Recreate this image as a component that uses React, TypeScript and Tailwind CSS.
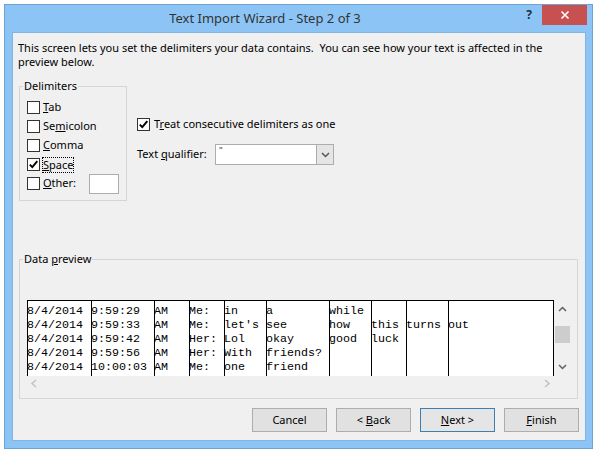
import React from "react";

function Check({ checked }: { checked?: boolean }) {
  return (
    <div className="w-[13px] h-[13px] border border-[#333333] bg-white flex items-center justify-center shrink-0">
      {checked && (
        <svg width="11" height="11" viewBox="0 0 11 11">
          <path d="M1.8 5.6 L4.3 8.2 L9.3 2.2" fill="none" stroke="#000" strokeWidth="1.9" />
        </svg>
      )}
    </div>
  );
}

const cols: { w: number; rows: string[] }[] = [
  { w: 63, rows: ["8/4/2014", "8/4/2014", "8/4/2014", "8/4/2014", "8/4/2014"] },
  { w: 63, rows: ["9:59:29", "9:59:33", "9:59:42", "9:59:56", "10:00:03"] },
  { w: 35, rows: ["AM", "AM", "AM", "AM", "AM"] },
  { w: 35, rows: ["Me:", "Me:", "Her:", "Her:", "Me:"] },
  { w: 42, rows: ["in", "let's", "Lol", "With", "one"] },
  { w: 63, rows: ["a", "see", "okay", "friends?", "friend"] },
  { w: 42, rows: ["while", "how", "good", "", ""] },
  { w: 35, rows: ["", "this", "luck", "", ""] },
  { w: 42, rows: ["", "turns", "", "", ""] },
  { w: 105, rows: ["", "out", "", "", ""] },
];

function Btn({ children, primary }: { children: React.ReactNode; primary?: boolean }) {
  return (
    <div
      className={
        "w-[75px] h-[24px] flex items-center justify-center border text-[11px] text-black " +
        (primary ? "border-[#3c7fb1] bg-[#e5e5e5]" : "border-[#adadad] bg-[#e1e1e1]")
      }
    >
      <span className="whitespace-pre">{children}</span>
    </div>
  );
}

export default function App() {
  return (
    <div className="w-[597px] h-[453px] bg-white pt-[4px] pl-[4px] font-['Noto_Sans',sans-serif] text-black">
      <div className="w-[589px] h-[445px] border border-[#6ea4d3] bg-[#8cc5f5] flex flex-col">
        {/* title bar */}
        <div className="h-[27px] flex items-start shrink-0">
          <div className="flex-1 h-[27px] flex items-center justify-center text-[13px] text-[#333333] pl-[8px]">
            Text Import Wizard - Step 2 of 3
          </div>
          <div className="w-[24px] h-[20px] flex items-center justify-center text-[12px] font-bold text-[#1e2d3d] mr-[1px]">
            ?
          </div>
          <div className="w-[45px] h-[20px] bg-[#c75050] flex items-center justify-center mr-[5px]">
            <svg width="10" height="10" viewBox="0 0 10 10">
              <path d="M1.5 1.5 L8.5 8.5 M8.5 1.5 L1.5 8.5" stroke="#fff" strokeWidth="1.6" />
            </svg>
          </div>
        </div>
        {/* content */}
        <div className="ml-[7px] mr-[6px] h-[409px] bg-[#f0f0f0] border border-[#82b5e0] flex flex-col pl-[5px] pt-[8px] text-[11px]">
          <div className="leading-[14px] whitespace-nowrap">
            <div>This screen lets you set the delimiters your data contains.&nbsp; You can see how your text is affected in the</div>
            <div>preview below.</div>
          </div>

          <div className="flex mt-[10px]">
            <fieldset className="ml-[1px] w-[108px] border border-[#d5d5d5] pl-[7px] pr-[7px] pt-[5px] pb-[7px]">
              <legend className="-ml-[4px] px-[1px] leading-[14px]">Delimiters</legend>
              <div className="flex flex-col">
                <div className="h-[19px] flex items-center">
                  <Check />
                  <span className="ml-[3px]"><u>T</u>ab</span>
                </div>
                <div className="h-[19px] flex items-center">
                  <Check />
                  <span className="ml-[3px]">Se<u>m</u>icolon</span>
                </div>
                <div className="h-[19px] flex items-center">
                  <Check />
                  <span className="ml-[3px]"><u>C</u>omma</span>
                </div>
                <div className="h-[19px] flex items-center">
                  <Check checked />
                  <span className="ml-[2px] border border-dotted border-black leading-[14px]"><u>S</u>pace</span>
                </div>
                <div className="h-[19px] flex items-center">
                  <Check />
                  <span className="ml-[3px]"><u>O</u>ther:</span>
                  <div className="ml-auto w-[30px] h-[20px] bg-white border border-[#abadb3]" />
                </div>
              </div>
            </fieldset>

            <div className="ml-[10px] pt-[36px] flex flex-col">
              <div className="h-[19px] flex items-center">
                <Check checked />
                <span className="ml-[4px]">T<u>r</u>eat consecutive delimiters as one</span>
              </div>
              <div className="mt-[10px] h-[21px] flex items-center">
                <span className="w-[78px]">Text <u>q</u>ualifier:</span>
                <div className="w-[119px] h-[21px] bg-white border border-[#abadb3] flex">
                  <div className="flex-1 pl-[3px] text-[9px] leading-[12px] text-[#333]">"</div>
                  <div className="w-[17px] h-full border-l border-[#acacac] bg-[#e5e5e5] flex items-center justify-center">
                    <svg width="9" height="6" viewBox="0 0 9 6">
                      <path d="M1 1 L4.5 4.5 L8 1" fill="none" stroke="#555" strokeWidth="1.5" />
                    </svg>
                  </div>
                </div>
              </div>
            </div>
          </div>

          <fieldset className="mt-[51px] ml-[1px] w-[559px] border border-[#d5d5d5] pl-[7px] pt-[34px] pb-[7px]">
            <legend className="-ml-[4px] px-[1px] leading-[14px]">Data <u>p</u>review</legend>
            <div className="flex">
              <div className="w-[527px] flex flex-col">
                <div className="h-[76px] bg-white border border-b-0 border-black flex font-['Liberation_Mono',monospace] text-[11.67px] leading-[14px] overflow-hidden">
                  {cols.map((c, i) => (
                    <div
                      key={i}
                      className={"shrink-0 h-[76px] pt-[3px] flex flex-col whitespace-pre " + (i === 0 ? "" : "border-l border-black")}
                      style={{ width: c.w }}
                    >
                      {c.rows.map((r, j) => (
                        <div key={j} className="h-[14px] -ml-[1px]">
                          {r}
                        </div>
                      ))}
                    </div>
                  ))}
                </div>
                <div className="h-[15px] flex items-center justify-between px-[3px]">
                  <svg width="8" height="9" viewBox="0 0 8 9">
                    <path d="M6 1 L2 4.5 L6 8" fill="none" stroke="#c2c2c2" strokeWidth="1.5" />
                  </svg>
                  <svg width="8" height="9" viewBox="0 0 8 9">
                    <path d="M2 1 L6 4.5 L2 8" fill="none" stroke="#c2c2c2" strokeWidth="1.5" />
                  </svg>
                </div>
              </div>
              <div className="w-[17px] flex flex-col">
                <div className="h-[76px] flex flex-col items-center">
                  <div className="h-[18px] w-full flex items-center justify-center">
                    <svg width="9" height="6" viewBox="0 0 9 6">
                      <path d="M1 5 L4.5 1.5 L8 5" fill="none" stroke="#606060" strokeWidth="1.5" />
                    </svg>
                  </div>
                  <div className="mt-[8px] ml-[1px] self-start w-[15px] h-[17px] bg-[#cdcdcd]" />
                  <div className="mt-auto h-[18px] w-full flex items-center justify-center">
                    <svg width="9" height="6" viewBox="0 0 9 6">
                      <path d="M1 1 L4.5 4.5 L8 1" fill="none" stroke="#606060" strokeWidth="1.5" />
                    </svg>
                  </div>
                </div>
              </div>
            </div>
          </fieldset>

          <div className="mt-[9px] flex justify-end gap-[9px] pr-[6px]">
            <Btn>Cancel</Btn>
            <Btn>&lt; <u>B</u>ack</Btn>
            <Btn primary><u>N</u>ext &gt;</Btn>
            <Btn><u>F</u>inish</Btn>
          </div>
        </div>
      </div>
    </div>
  );
}
